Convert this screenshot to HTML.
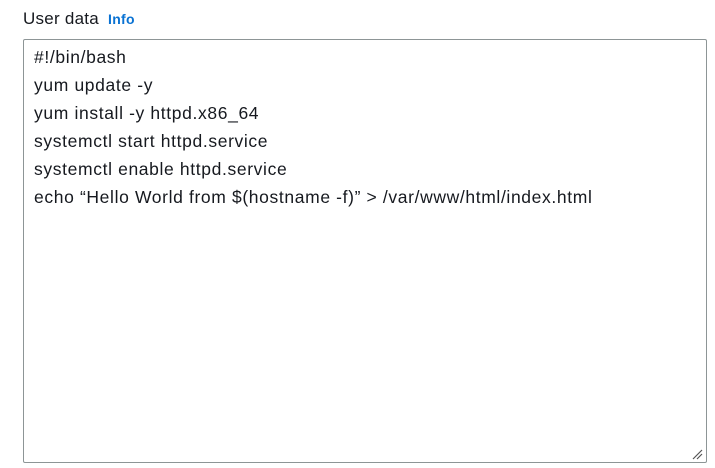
<!DOCTYPE html>
<html><head><style>
html,body{margin:0;padding:0;background:#fff;width:715px;height:468px;overflow:hidden;font-family:"Liberation Sans",Arial,sans-serif;}
.label{position:absolute;left:23px;top:8px;font-size:17px;letter-spacing:0.25px;color:#16191f;line-height:22px;}
.info{position:absolute;left:108px;top:10px;font-size:14px;font-weight:bold;color:#0972d3;line-height:18px;letter-spacing:0.3px;}
.ta{position:absolute;left:23px;top:39px;width:682px;height:422px;border:1px solid #8d9596;border-radius:2px;box-sizing:content-box;}
.txt{position:absolute;left:34px;top:43px;font-size:17.5px;letter-spacing:0.63px;line-height:28px;color:#16191f;white-space:pre;}
svg{position:absolute;left:692px;top:449px;}
</style></head><body>
<div class="label">User data</div>
<div class="info">Info</div>
<div class="ta"></div>
<div class="txt">#!/bin/bash
yum update -y
yum install -y httpd.x86_64
systemctl start httpd.service
systemctl enable httpd.service
echo “Hello World from $(hostname -f)” &gt; /var/www/html/index.html</div>
<svg width="11" height="11" viewBox="0 0 11 11"><path d="M1 10L10 1M5 10L10 5" stroke="#555" stroke-width="1.2"/></svg>
</body></html>
